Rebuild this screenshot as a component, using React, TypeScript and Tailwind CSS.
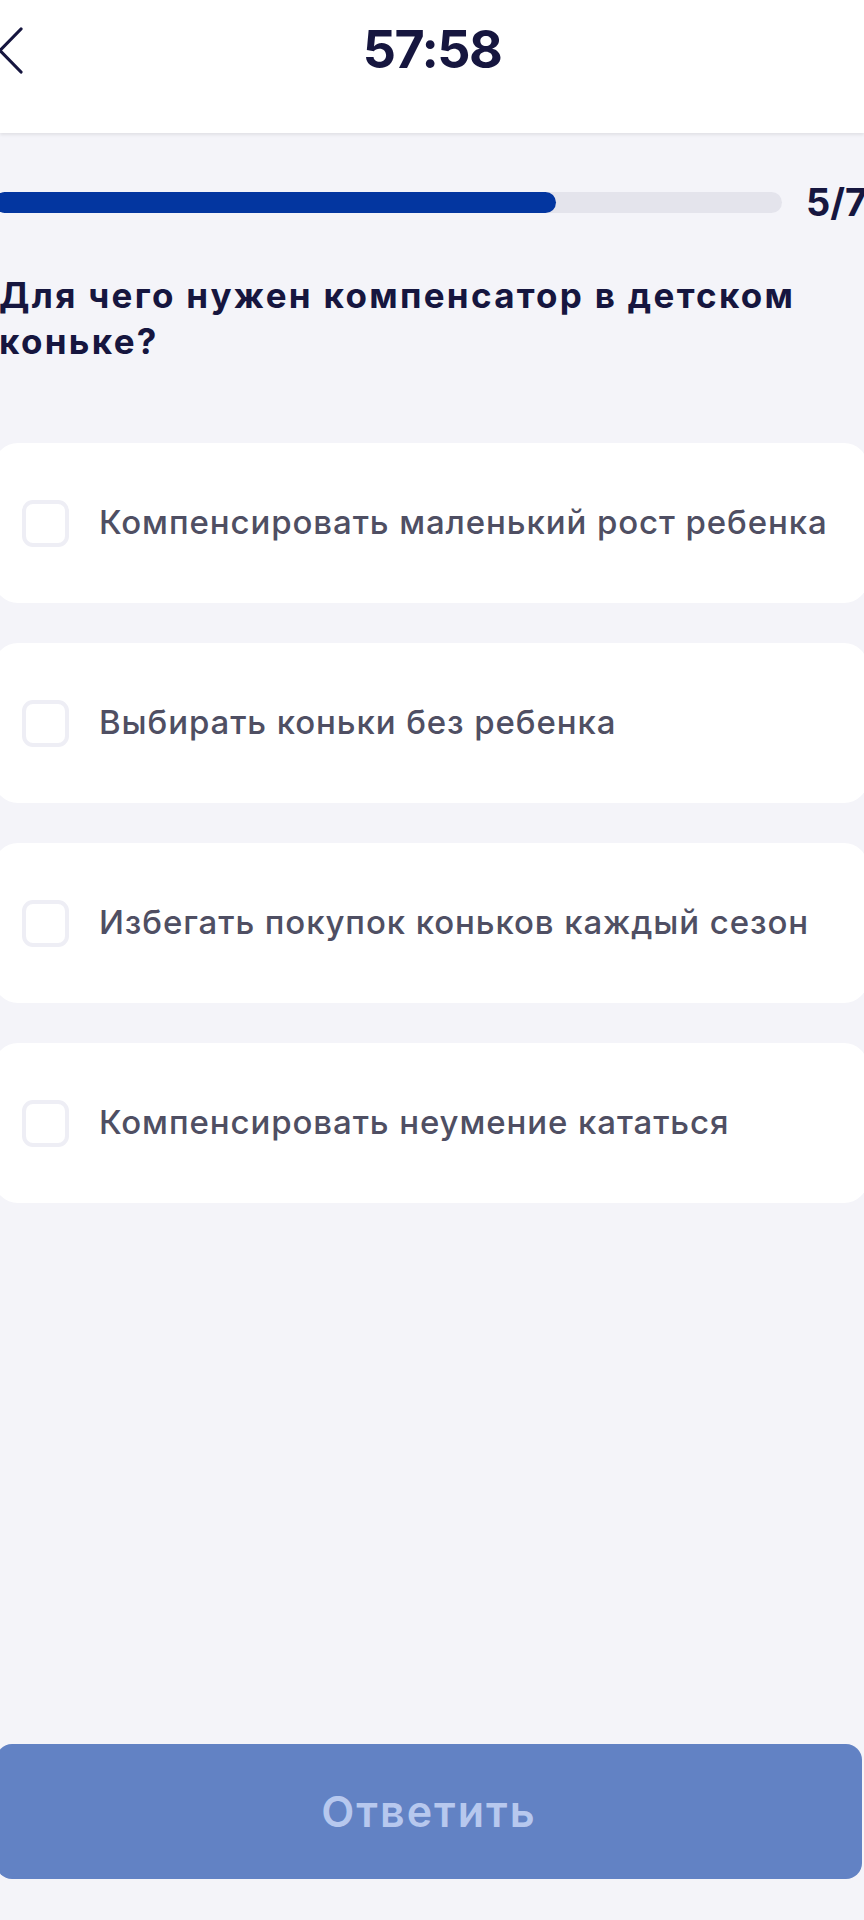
import React from "react";

const options = [
  "Компенсировать маленький рост ребенка",
  "Выбирать коньки без ребенка",
  "Избегать покупок коньков каждый сезон",
  "Компенсировать неумение кататься",
];

export default function App() {
  return (
    <div
      className="min-h-[1920px] w-[864px] overflow-hidden bg-[#f4f4f9] flex flex-col"
      style={{ fontFamily: "Inter, 'Noto Sans', sans-serif" }}
    >
      <header className="h-[133px] bg-white shadow-[0_2px_3px_rgba(0,0,0,0.08)] relative z-10 shrink-0">
        <div className="h-[100px] grid grid-cols-[100px_1fr_100px] items-center">
          <div className="flex items-center">
            <svg width="26" height="48" viewBox="0 0 26 48" className="-ml-[2px]">
              <path d="M23 3 L2 24.5 L23 46" fill="none" stroke="#16163f" strokeWidth="3.2" strokeLinecap="round" strokeLinejoin="round" />
            </svg>
          </div>
          <div className="text-center text-[52px] font-bold text-[#16163f] tracking-[-1.5px] leading-none">57:58</div>
          <div />
        </div>
      </header>

      <main className="-ml-[6px] w-[874px] flex flex-col flex-1">
        <div className="mt-[49px] h-[40px] flex items-center gap-[24px]">
          <div className="w-[788px] h-[21px] rounded-full bg-[#e4e4ec] overflow-hidden shrink-0">
            <div className="h-full w-[562px] rounded-full bg-[#0336a0]" />
          </div>
          <div className="text-[38px] font-bold text-[#16163f] leading-none whitespace-nowrap">5/7</div>
        </div>

        <h1 className="mt-[50px] text-[35px] leading-[46px] font-bold text-[#16163f] pl-[5px] pr-[30px] tracking-[2.3px]">
          Для чего нужен компенсатор в детском коньке?
        </h1>

        <div className="mt-[79px] flex flex-col gap-[40px]">
          {options.map((o) => (
            <div key={o} className="h-[160px] bg-white rounded-[24px] flex items-center pl-[28px]">
              <div className="w-[47px] h-[47px] rounded-[11px] border-[4px] border-[#eeeef5] shrink-0" />
              <div className="ml-[30px] text-[33px] font-medium tracking-[0.9px] text-[#4f4f63] whitespace-nowrap">{o}</div>
            </div>
          ))}
        </div>

        <div className="flex-1" />

        <button className="ml-[2px] mb-[41px] w-[866px] h-[135px] rounded-[16px] bg-[#6282c4] text-[#b7c8ee] text-[43px] font-semibold tracking-[2px] flex items-center justify-center">
          Ответить
        </button>
      </main>
    </div>
  );
}
